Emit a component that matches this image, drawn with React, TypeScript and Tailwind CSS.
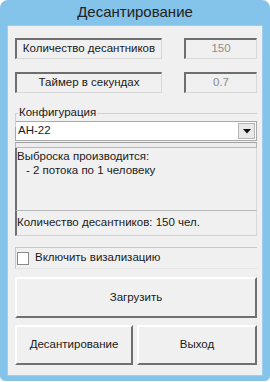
const font = "font-['Liberation_Sans',Arial,sans-serif]"

function Sunken({ children, className }: { children: React.ReactNode; className: string }) {
  return (
    <div
      className={`flex items-center justify-center h-[21px] border-t-2 border-l-2 border-t-[#6e6e6e] border-l-[#6e6e6e] border-b border-r border-b-[#d8d8d8] border-r-[#d8d8d8] text-[11.5px] ${className}`}
    >
      {children}
    </div>
  )
}

function Raised({ children, className }: { children: React.ReactNode; className: string }) {
  return (
    <button
      className={`flex items-center justify-center bg-[#f0f0f0] border-t-2 border-l-2 border-t-white border-l-white border-b-2 border-r-2 border-b-[#707070] border-r-[#707070] text-[11.5px] text-[#1a1a1a] ${className}`}
    >
      {children}
    </button>
  )
}

export default function App() {
  return (
    <div className={`w-[270px] h-[382px] bg-white ${font}`}>
      <div className="w-[270px] h-[381px] bg-[#84c3ea] rounded-t-[8px] rounded-b-[5px] flex flex-col">
        <div className="h-[25px] flex items-center justify-center text-[15px] text-[#222]">
          Десантирование
        </div>
        <div className="mx-[7px] h-[351px] bg-[#f0f0f0] border border-[#9fcdec] pl-[7px] pr-[5px] flex flex-col text-[#1a1a1a]">
          <div className="flex justify-between mt-[12px]">
            <Sunken className="w-[147px]">Количество десантников</Sunken>
            <Sunken className="w-[73px] text-[#8c8c8c]">150</Sunken>
          </div>
          <div className="flex justify-between mt-[13px]">
            <Sunken className="w-[147px]">Таймер в секундах</Sunken>
            <Sunken className="w-[73px] text-[#8c8c8c]">0.7</Sunken>
          </div>

          <div className="mt-[14px] h-[14px] relative border-t border-[#d0d0d0] border-l border-l-[#d0d0d0] translate-y-[6px]">
            <span className="absolute -top-[9px] left-[2px] bg-[#f0f0f0] px-[1px] text-[11.5px] leading-[14px]">
              Конфигурация
            </span>
          </div>

          <div className="h-[20px] bg-white border border-[#a9a9a9] flex items-center text-[11.5px]">
            <span className="flex-1 pl-[2px]">АН-22</span>
            <div className="w-[17px] h-[16px] mr-[1px] bg-[#e9e9e9] border border-[#b5b5b5] flex items-center justify-center">
              <svg width="8" height="5" viewBox="0 0 8 5">
                <path d="M0 0 H8 L4 4.5 Z" fill="#111" />
              </svg>
            </div>
          </div>
          <div className="h-[6px] mt-[1px] border border-[#b8b8b8] border-t-[#a0a0a0] bg-[#ececec]" />

          <div className="h-[63px] border-l-2 border-l-[#707070] border-b border-b-[#b8b8b8] border-r border-r-[#d8d8d8] text-[11.5px] leading-[14px] pt-[1px]">
            <div>Выброска производится:</div>
            <div className="pl-[9px]">- 2 потока по 1 человеку</div>
          </div>

          <div className="h-[25px] border-l-2 border-l-[#707070] border-b border-b-[#d0d0d0] border-r border-r-[#d8d8d8] text-[11.5px] flex items-center">
            Количество десантников: 150 чел.
          </div>

          <div className="mt-[11px] h-[22px] border-t border-l border-[#c8c8c8] border-b border-b-[#e4e4e4] flex items-center gap-[6px] text-[11.5px]">
            <div className="w-[12px] h-[13px] bg-white border border-[#8a8a8a] ml-[1px]" />
            <span>Включить визализацию</span>
          </div>

          <Raised className="mt-[8px] h-[41px] w-full">Загрузить</Raised>
          <div className="flex gap-[4px] mt-[7px]">
            <Raised className="h-[40px] w-[118px]">Десантирование</Raised>
            <Raised className="h-[40px] flex-1">Выход</Raised>
          </div>
        </div>
      </div>
    </div>
  )
}
